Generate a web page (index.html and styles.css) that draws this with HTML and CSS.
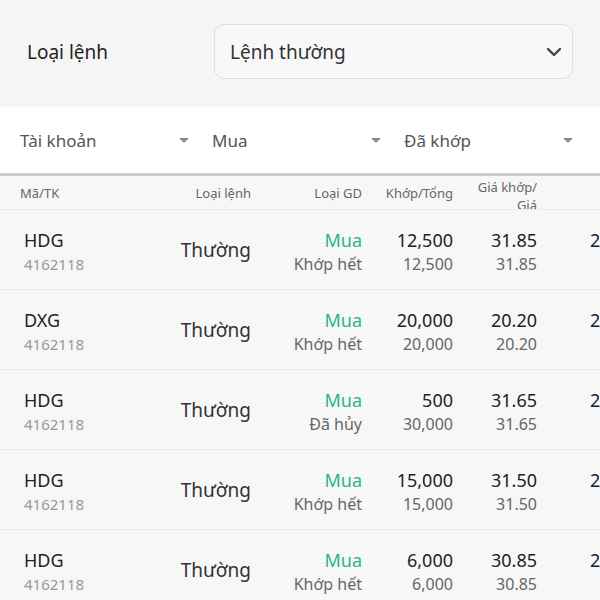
FILE: index.html
```html
<!DOCTYPE html>
<html lang="vi">
<head>
    <meta charset="UTF-8">
    <meta name="viewport" content="width=device-width, initial-scale=1.0">
    <title>Sổ lệnh</title>
    <link rel="stylesheet" href="styles.css">
</head>
<body>
    <div class="order-type">
        <span class="order-label">Loại lệnh</span>
        <div class="select-box">
            <span>Lệnh thường</span>
            <svg width="16" height="10" viewBox="0 0 16 10"><path d="M2 2 L8 8 L14 2" fill="none" stroke="#444" stroke-width="2.4" stroke-linecap="round" stroke-linejoin="round"/></svg>
        </div>
    </div>

    <div class="filters">
        <div class="filter"><span>Tài khoản</span><i class="caret"></i></div>
        <div class="filter"><span>Mua</span><i class="caret"></i></div>
        <div class="filter"><span>Đã khớp</span><i class="caret"></i></div>
    </div>

    <div class="table">
        <div class="row head">
            <div class="c-code">Mã/TK</div>
            <div class="c-type">Loại lệnh</div>
            <div class="c-side">Loại GD</div>
            <div class="c-qty">Khớp/Tổng</div>
            <div class="c-price two-line">Giá khớp/<br>Giá</div>
            <div class="c-more"></div>
        </div>

        <div class="row">
            <div class="c-code"><div class="main">HDG</div><div class="sub acc">4162118</div></div>
            <div class="c-type">Thường</div>
            <div class="c-side"><div class="main buy">Mua</div><div class="sub">Khớp hết</div></div>
            <div class="c-qty"><div class="main">12,500</div><div class="sub">12,500</div></div>
            <div class="c-price"><div class="main">31.85</div><div class="sub">31.85</div></div>
            <div class="c-more"><div class="main">27/05</div></div>
        </div>

        <div class="row">
            <div class="c-code"><div class="main">DXG</div><div class="sub acc">4162118</div></div>
            <div class="c-type">Thường</div>
            <div class="c-side"><div class="main buy">Mua</div><div class="sub">Khớp hết</div></div>
            <div class="c-qty"><div class="main">20,000</div><div class="sub">20,000</div></div>
            <div class="c-price"><div class="main">20.20</div><div class="sub">20.20</div></div>
            <div class="c-more"><div class="main">27/05</div></div>
        </div>

        <div class="row">
            <div class="c-code"><div class="main">HDG</div><div class="sub acc">4162118</div></div>
            <div class="c-type">Thường</div>
            <div class="c-side"><div class="main buy">Mua</div><div class="sub">Đã hủy</div></div>
            <div class="c-qty"><div class="main">500</div><div class="sub">30,000</div></div>
            <div class="c-price"><div class="main">31.65</div><div class="sub">31.65</div></div>
            <div class="c-more"><div class="main">26/05</div></div>
        </div>

        <div class="row">
            <div class="c-code"><div class="main">HDG</div><div class="sub acc">4162118</div></div>
            <div class="c-type">Thường</div>
            <div class="c-side"><div class="main buy">Mua</div><div class="sub">Khớp hết</div></div>
            <div class="c-qty"><div class="main">15,000</div><div class="sub">15,000</div></div>
            <div class="c-price"><div class="main">31.50</div><div class="sub">31.50</div></div>
            <div class="c-more"><div class="main">26/05</div></div>
        </div>

        <div class="row">
            <div class="c-code"><div class="main">HDG</div><div class="sub acc">4162118</div></div>
            <div class="c-type">Thường</div>
            <div class="c-side"><div class="main buy">Mua</div><div class="sub">Khớp hết</div></div>
            <div class="c-qty"><div class="main">6,000</div><div class="sub">6,000</div></div>
            <div class="c-price"><div class="main">30.85</div><div class="sub">30.85</div></div>
            <div class="c-more"><div class="main">25/05</div></div>
        </div>
    </div>
</body>
</html>
```

FILE: styles.css
```css
body {
    margin: 0;
    font-family: 'Noto Sans', 'DejaVu Sans', sans-serif;
    background: #f7f7f7;
    color: #222;
    overflow: hidden;
    width: 600px;
    height: 600px;
}

.order-type {
    display: flex;
    align-items: center;
    padding: 24px 27px 27px;
    background: #f5f5f5;
}

.order-label {
    width: 187px;
    font-size: 19px;
    color: #222;
}

.select-box {
    flex: 1;
    height: 53px;
    display: flex;
    align-items: center;
    justify-content: space-between;
    padding: 0 10px 0 15px;
    border: 1px solid #dedede;
    border-radius: 10px;
    background: #f8f8f8;
    font-size: 19px;
    color: #333;
}

.filters {
    display: flex;
    gap: 23px;
    height: 66px;
    align-items: center;
    padding-left: 20px;
    background: #fff;
    border-bottom: 3px solid #cdcdcd;
    margin-top: 1px;
}

.filter {
    width: 169px;
    display: flex;
    align-items: center;
    justify-content: space-between;
    font-size: 17px;
    color: #555;
}

.caret {
    width: 0;
    height: 0;
    border-left: 5px solid transparent;
    border-right: 5px solid transparent;
    border-top: 5px solid #888;
}

.row {
    display: grid;
    grid-template-columns: 136px 91px 111px 91px 84px 100px;
    padding-left: 24px;
    height: 80px;
    align-items: start;
    border-bottom: 1px solid #ebebeb;
    box-sizing: border-box;
}

.row > div {
    padding-top: 18px;
    white-space: nowrap;
}

.row.head {
    height: 34px;
    overflow: hidden;
    font-size: 13px;
    color: #666;
    line-height: 18px;
    padding-left: 20px;
    grid-template-columns: 140px 91px 111px 91px 84px 100px;
}

.row.head > div {
    padding-top: 8px;
}

.row.head > .two-line {
    padding-top: 2px;
}

.c-type,
.c-side,
.c-qty,
.c-price {
    text-align: right;
}

.row > .c-type {
    align-self: center;
    padding-top: 0;
    font-size: 19px;
    color: #333;
}

.row.head > .c-type {
    align-self: start;
    padding-top: 8px;
    font-size: 13px;
    color: #666;
}

.c-more {
    padding-left: 53px;
}

.main {
    font-size: 18px;
    line-height: 24px;
    color: #222;
}

.sub {
    font-size: 16px;
    line-height: 24px;
    color: #666;
}

.sub.acc {
    font-size: 15px;
    color: #999;
}

.buy {
    color: #2bb68b;
}
```
